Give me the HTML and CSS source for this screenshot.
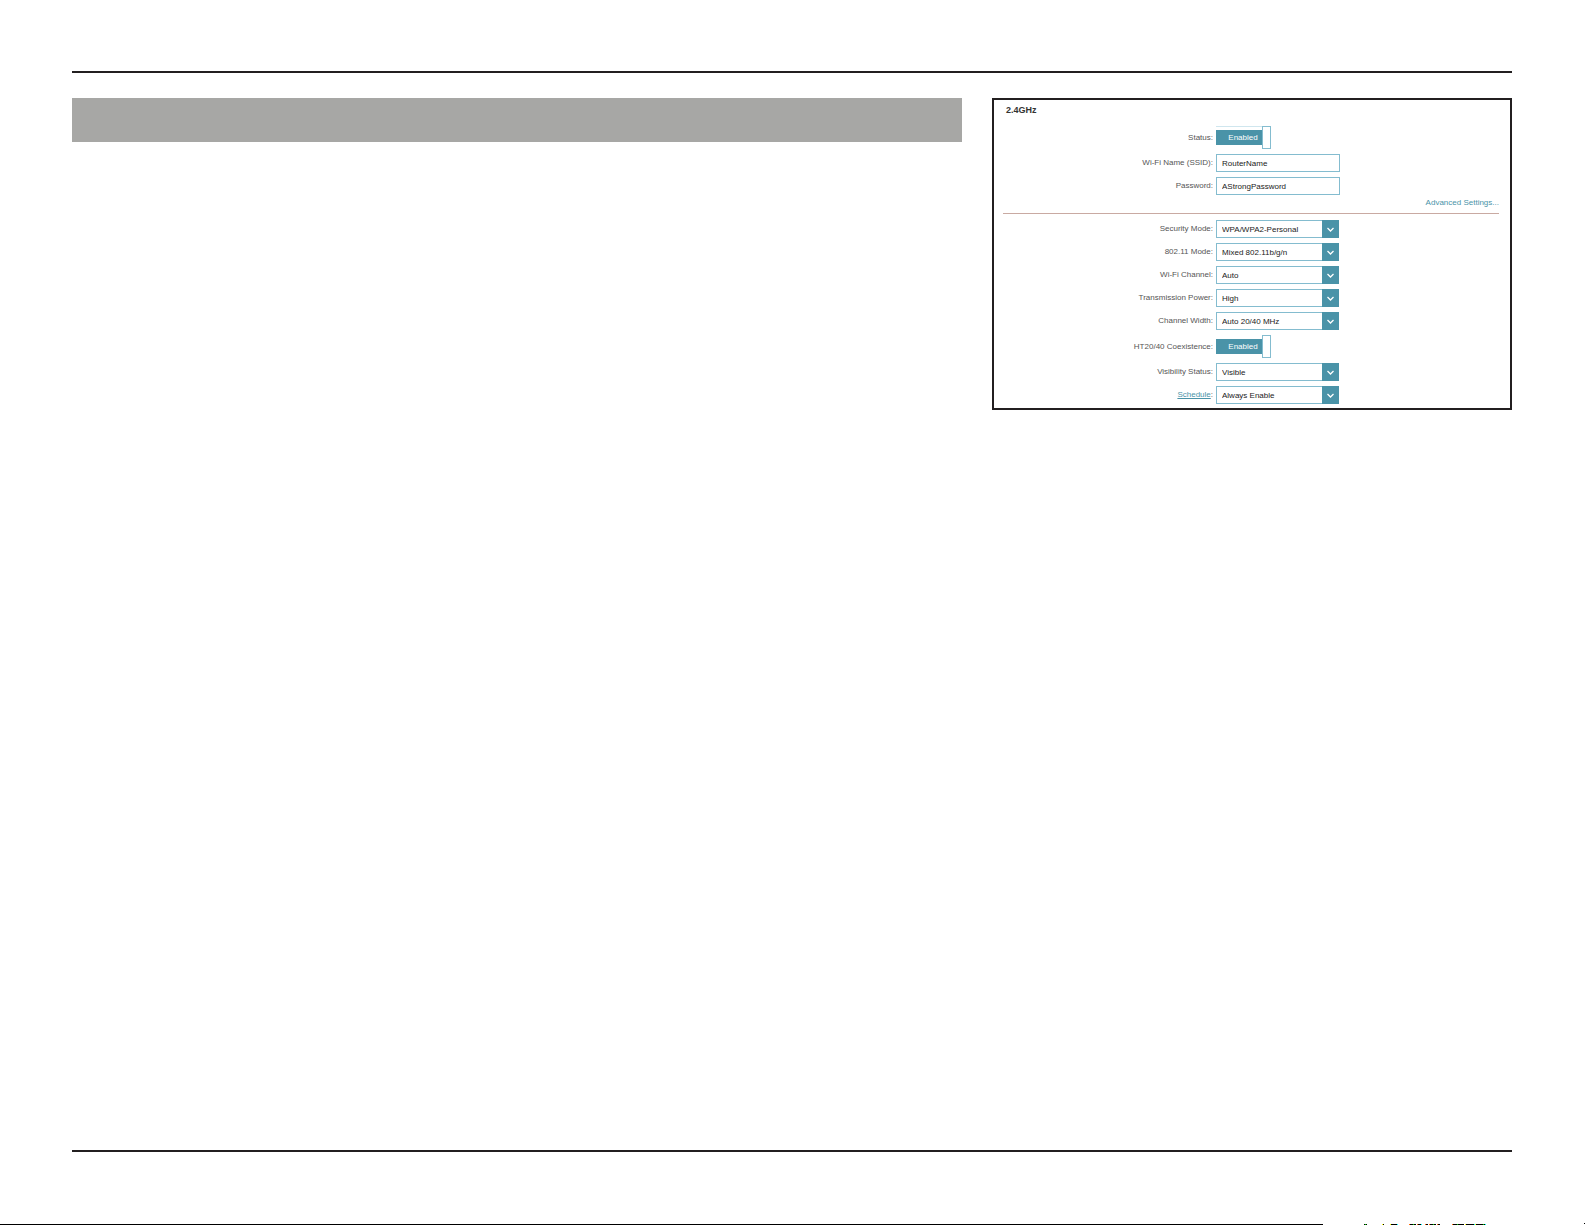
FILE: index.html
```html
<!DOCTYPE html>
<html lang="en">
<head>
    <meta charset="utf-8">
    <title>Wi-Fi Settings</title>
    <link rel="stylesheet" href="styles.css">
</head>
<body>

<div class="page">
    <div class="content">
        <div class="title-bar"></div>

        <form class="panel">
            <h2>2.4GHz</h2>

            <div class="row">
                <label for="status">Status:</label>
                <button type="button" class="toggle toggle-lined" id="status"><span>Enabled</span></button>
            </div>
            <div class="row">
                <label for="ssid">Wi-Fi Name (SSID):</label>
                <input type="text" id="ssid" value="RouterName">
            </div>
            <div class="row">
                <label for="password">Password:</label>
                <input type="text" id="password" value="AStrongPassword">
            </div>

            <div class="advanced"><a href="#">Advanced Settings...</a></div>

            <div class="row">
                <label for="security">Security Mode:</label>
                <div class="select">
                    <select id="security"><option>WPA/WPA2-Personal</option></select>
                    <svg viewBox="0 0 17 18"><path d="M5.5 8L8.5 11L11.5 8"/></svg>
                </div>
            </div>
            <div class="row">
                <label for="mode">802.11 Mode:</label>
                <div class="select">
                    <select id="mode"><option>Mixed 802.11b/g/n</option></select>
                    <svg viewBox="0 0 17 18"><path d="M5.5 8L8.5 11L11.5 8"/></svg>
                </div>
            </div>
            <div class="row">
                <label for="channel">Wi-Fi Channel:</label>
                <div class="select">
                    <select id="channel"><option>Auto</option></select>
                    <svg viewBox="0 0 17 18"><path d="M5.5 8L8.5 11L11.5 8"/></svg>
                </div>
            </div>
            <div class="row">
                <label for="power">Transmission Power:</label>
                <div class="select">
                    <select id="power"><option>High</option></select>
                    <svg viewBox="0 0 17 18"><path d="M5.5 8L8.5 11L11.5 8"/></svg>
                </div>
            </div>
            <div class="row">
                <label for="width">Channel Width:</label>
                <div class="select">
                    <select id="width"><option>Auto 20/40 MHz</option></select>
                    <svg viewBox="0 0 17 18"><path d="M5.5 8L8.5 11L11.5 8"/></svg>
                </div>
            </div>
            <div class="row">
                <label for="coexistence">HT20/40 Coexistence:</label>
                <button type="button" class="toggle" id="coexistence"><span>Enabled</span></button>
            </div>
            <div class="row">
                <label for="visibility">Visibility Status:</label>
                <div class="select">
                    <select id="visibility"><option>Visible</option></select>
                    <svg viewBox="0 0 17 18"><path d="M5.5 8L8.5 11L11.5 8"/></svg>
                </div>
            </div>
            <div class="row">
                <label for="schedule"><a href="#">Schedule</a>:</label>
                <div class="select">
                    <select id="schedule"><option>Always Enable</option></select>
                    <svg viewBox="0 0 17 18"><path d="M5.5 8L8.5 11L11.5 8"/></svg>
                </div>
            </div>
        </form>
    </div>
</div>

<div class="edge">
    <div class="edge-line"></div>
    <svg class="edge-marks" viewBox="0 0 262 2" shape-rendering="crispEdges">
        <path d="M41 1h3v1h-3zM60 1h1v1h-1zM68 1h6v1h-6zM87 1h6v1h-6zM95 1h3v1h-3zM103 1h2v1h-2zM107 1h6v1h-6zM115 1h2v1h-2zM130 1h11v1h-11zM143 1h8v1h-8zM153 1h9v1h-9zM261 0h1v1h-1z"/>
        <path fill="#ff0" d="M59 1h1v1h-1zM67 1h1v1h-1zM142 1h1v1h-1zM152 1h1v1h-1z"/>
        <path fill="#f60" d="M86 1h1v1h-1zM94 1h1v1h-1zM102 1h1v1h-1zM106 1h1v1h-1zM114 1h1v1h-1zM129 1h1v1h-1z"/>
        <path fill="#0ff" d="M74 1h1v1h-1zM98 1h1v1h-1zM151 1h1v1h-1zM162 1h1v1h-1z"/>
        <path fill="#0c0" d="M42 1h1v1h-1zM90 1h1v1h-1zM110 1h1v1h-1zM134 1h1v1h-1zM160 1h1v1h-1z"/>
    </svg>
</div>

</body>
</html>
```
FILE: styles.css
```css
*, *::after { box-sizing: border-box; }
body { margin: 0; min-height: 100vh; display: flex; flex-direction: column; background-color: #fff; font-family: "Liberation Sans", Arial, sans-serif; font-size: 8px; }

.page { flex: 1; margin: 71px 73px 71px 72px; border-top: 2px solid #231f20; border-bottom: 2px solid #231f20; }
.content { display: flex; align-items: flex-start; gap: 30px; padding-top: 25px; }
.title-bar { flex: 1; height: 44px; background-color: #a7a7a5; }

.panel { width: 520px; padding: 5px 11px 4px 9px; border: 2px solid #231f20; display: flex; flex-direction: column; gap: 5px; }
h2 { margin: 0 0 6px 3px; font-size: 9px; line-height: 10px; color: #333; }
.row { display: grid; grid-template-columns: 210px 1fr; column-gap: 3px; align-items: center; }
label { text-align: right; line-height: 18px; color: #555; }
a { color: #4a93a8; }

input, select { display: block; height: 18px; margin: 0; padding: 0 5px; border: 1px solid #84bccf; border-radius: 0; background-color: #fff; color: #222; font-family: inherit; font-size: 8px; }
input { width: 124px; }
.select { position: relative; width: 123px; }
select { width: 100%; appearance: none; }
.select svg { position: absolute; top: 0; right: 0; width: 17px; height: 18px; background-color: #4a93a8; fill: none; stroke: #fff; stroke-width: 1.3; pointer-events: none; }

.toggle { display: flex; align-items: center; width: 55px; height: 23px; padding: 0; border: none; background: none; color: #fff; font-family: inherit; font-size: 8px; }
.toggle span { flex: 1; padding-left: 8px; line-height: 15px; background-color: #4a93a8; }
.toggle::after { content: ""; width: 9px; height: 23px; border: 1px solid #84bccf; background-color: #fff; }
.toggle-lined { box-shadow: inset 0 1px #cfe6ee; }

.advanced { margin-top: -5px; margin-bottom: 1px; height: 19px; border-bottom: 1px solid #c9aaa2; line-height: 16px; text-align: right; }
.advanced a { text-decoration: none; }

/* one pixel strip along the bottom of the window */
.edge { display: flex; align-items: flex-end; height: 2px; }
.edge-line { flex: 1; height: 1px; background-color: #000; }
.edge-marks { width: 262px; height: 2px; }
```
